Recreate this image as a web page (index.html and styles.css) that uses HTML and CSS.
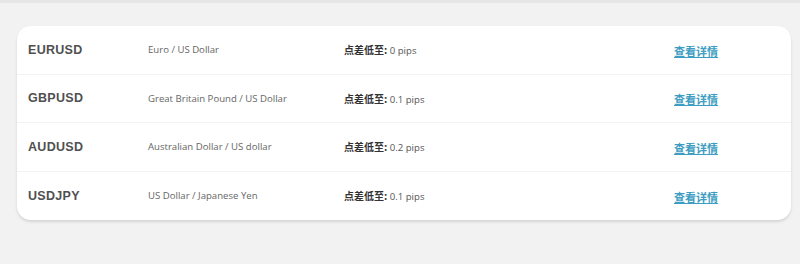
FILE: index.html
```html
<!DOCTYPE html>
<html lang="zh">
<head>
<meta charset="utf-8">
<link rel="stylesheet" href="styles.css">
</head>
<body>
<div class="topbar"></div>
<div class="page">
  <div class="card">
    <div class="row">
      <div class="sym">EURUSD</div>
      <div class="desc">Euro / US Dollar</div>
      <div class="spread"><b>点差低至:</b> 0 pips</div>
      <div class="more"><a href="#">查看详情</a></div>
    </div>
    <div class="row">
      <div class="sym">GBPUSD</div>
      <div class="desc">Great Britain Pound / US Dollar</div>
      <div class="spread"><b>点差低至:</b> 0.1 pips</div>
      <div class="more"><a href="#">查看详情</a></div>
    </div>
    <div class="row">
      <div class="sym">AUDUSD</div>
      <div class="desc">Australian Dollar / US dollar</div>
      <div class="spread"><b>点差低至:</b> 0.2 pips</div>
      <div class="more"><a href="#">查看详情</a></div>
    </div>
    <div class="row">
      <div class="sym">USDJPY</div>
      <div class="desc">US Dollar / Japanese Yen</div>
      <div class="spread"><b>点差低至:</b> 0.1 pips</div>
      <div class="more"><a href="#">查看详情</a></div>
    </div>
  </div>
</div>
</body>
</html>
```

FILE: styles.css
```css
html, body {
  margin: 0;
  padding: 0;
  background: #f2f2f2;
}
body {
  width: 800px;
  height: 264px;
  overflow: hidden;
  font-family: "Open Sans", "Noto Sans CJK SC", sans-serif;
}
.topbar {
  height: 3px;
  background: #e6e6e6;
}
.page {
  padding: 23px 9px 0 17px;
}
.card {
  background: #fff;
  border-radius: 14px;
  box-shadow: 0 2px 3px rgba(0,0,0,0.12);
  overflow: hidden;
}
.row {
  display: grid;
  grid-template-columns: 120px 196px 330px 1fr;
  align-items: center;
  box-sizing: border-box;
  height: 48.5px;
  padding-left: 11px;
  border-bottom: 1px solid #f3f3f3;
}
.row:last-child {
  border-bottom: none;
}
.sym {
  font-family: "Liberation Sans", Arial, sans-serif;
  font-weight: bold;
  font-size: 12.5px;
  color: #505050;
  letter-spacing: 0.3px;
}
.desc {
  font-size: 9.6px;
  color: #666;
}
.spread {
  font-size: 9.6px;
  color: #555;
}
.spread b {
  font-family: "Noto Sans CJK SC", sans-serif;
  font-size: 10px;
  font-weight: bold;
  color: #333;
}
.more a {
  font-family: "Noto Sans CJK SC", sans-serif;
  font-size: 11px;
  font-weight: bold;
  color: #3d9dc2;
  text-decoration: underline;
}
```
